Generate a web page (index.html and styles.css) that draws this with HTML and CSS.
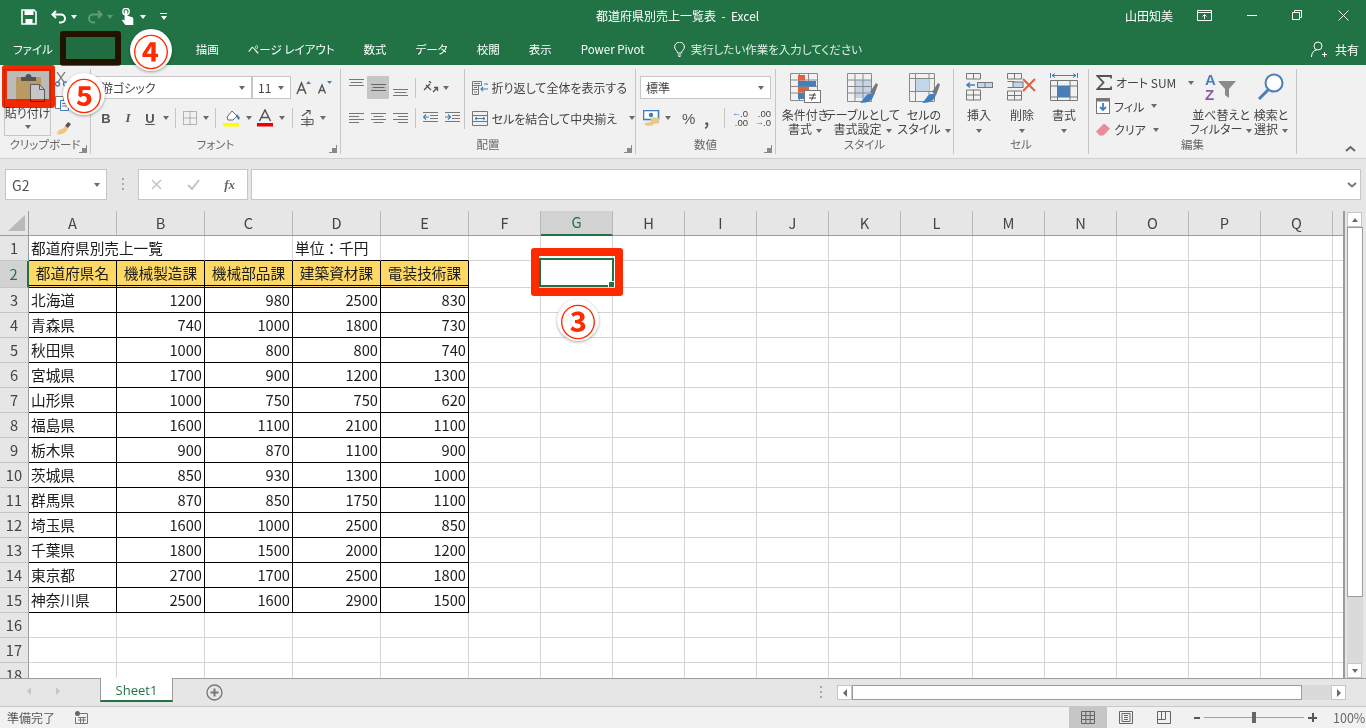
FILE: index.html
```html
<!DOCTYPE html>
<html lang="ja">
<head>
  <meta charset="UTF-8">
  <title>都道府県別売上一覧表 - Excel</title>
  <link rel="stylesheet" href="styles.css">
</head>
<body>
<div class="app">

  <!-- title bar -->
  <header class="titlebar">
    <div class="qat">
      <svg class="q-save" width="16" height="16" viewBox="0 0 16 16"><path d="M1 1h12l2 2v12H1z" fill="none" stroke="#fff" stroke-width="1.6"/><rect x="3.5" y="1" width="9" height="5" fill="#fff"/><rect x="4.5" y="10" width="7" height="5" fill="#fff"/></svg>
      <svg class="q-undo" width="16" height="14" viewBox="0 0 16 14"><path d="M5 1L1.5 4.5 5 8M2 4.5h8a4 4 0 0 1 0 8H8" fill="none" stroke="#fff" stroke-width="2"/></svg>
      <i class="caret white q-c1"></i>
      <svg class="q-redo" width="16" height="14" viewBox="0 0 16 14"><path d="M11 1l3.5 3.5L11 8M14 4.5H6a4 4 0 0 0 0 8h2" fill="none" stroke="#5f9c7e" stroke-width="2"/></svg>
      <i class="caret dim q-c2"></i>
      <svg class="q-touch" width="13" height="17" viewBox="0 0 13 17"><circle cx="5" cy="3.5" r="3.2" fill="none" stroke="#fff" stroke-width="1.4"/><path d="M3.6 3.5a1.4 1.4 0 0 1 2.8 0v4.2l4.2 1.3c1.2.4 1.7 1 1.7 2V17H4.4L1 12.6l1-1.2 1.6 1z" fill="#fff"/></svg>
      <i class="caret white q-c3"></i>
      <span class="q-more"><i class="q-line"></i><i class="caret white"></i></span>
    </div>
    <div class="doc-title">都道府県別売上一覧表&nbsp; - &nbsp;Excel</div>
    <div class="win">
      <span class="user">山田知美</span>
      <svg class="w-disp" width="15" height="11" viewBox="0 0 15 11"><path d="M.5 .5h14v10H.5zM.5 2.5h14M7.5 9V4.500M5.500 6.500l2-2 2 2" fill="none" stroke="#fff"/></svg>
      <svg class="w-min" width="10" height="1" viewBox="0 0 10 1"><path d="M0 .5h10" stroke="#fff"/></svg>
      <svg class="w-max" width="10" height="10" viewBox="0 0 10 10"><path d="M.5 2.500h7v7h-7zM2.500 2.500v-2h7v7h-2" fill="none" stroke="#fff"/></svg>
      <svg class="w-close" width="11" height="11" viewBox="0 0 11 11"><path d="M.5 .5l10 10M10.500 .5l-10 10" stroke="#fff"/></svg>
    </div>
  </header>

  <!-- tabs -->
  <nav class="tabs">
    <span class="tab">ファイル</span>
    <span class="tab active">ホーム</span>
    <span class="tab">挿入</span>
    <span class="tab">描画</span>
    <span class="tab">ページ レイアウト</span>
    <span class="tab">数式</span>
    <span class="tab">データ</span>
    <span class="tab">校閲</span>
    <span class="tab">表示</span>
    <span class="tab">Power Pivot</span>
    <span class="tell">
      <svg width="11" height="15" viewBox="0 0 11 15"><path d="M3.500 11C3.500 8.500 .6 8 .6 5a4.900 4.900 0 0 1 9.800 0c0 3-2.900 3.500-2.900 6zM3.800 13h3.400M4.500 14.500h2" fill="none" stroke="#fff"/></svg>
      実行したい作業を入力してください
    </span>
    <span class="share">
      <svg width="16" height="16" viewBox="0 0 16 16"><circle cx="7" cy="5" r="4" fill="none" stroke="#fff"/><path d="M.5 16c0-4 2-6.500 5-7M11 13.500h5M13.500 11v5" fill="none" stroke="#fff"/></svg>
      共有
    </span>
  </nav>

  <!-- ribbon -->
  <section class="ribbon">

    <div class="group g-clip">
      <div class="group-body clip-body">
        <div class="paste">
          <svg class="paste-ico" width="30" height="29" viewBox="0 0 30 29"><rect x="0" y="4" width="25" height="24" fill="#edc77f"/><path d="M5 8V4h4.500a3 3 0 0 1 6 0H20v4z" fill="#6a6a6a"/><path d="M14.500 11.500h9l5 5v12h-14z" fill="#fff" stroke="#777"/><path d="M23.500 11.500v5h5" fill="none" stroke="#777"/></svg>
          <span class="paste-label">貼り付け</span>
          <i class="caret"></i>
        </div>
        <div class="clip-tools">
          <svg width="14" height="15" viewBox="0 0 14 15"><path d="M2 0l7 10M10 0L3 10" stroke="#777" stroke-width="1.300"/><circle cx="2.500" cy="12" r="2" fill="none" stroke="#3f7fbf" stroke-width="1.300"/><circle cx="10.500" cy="12" r="2" fill="none" stroke="#3f7fbf" stroke-width="1.300"/></svg>
          <svg width="14" height="15" viewBox="0 0 14 15"><path d="M.5 .5h8v12h-8z" fill="#fff" stroke="#777"/><path d="M5.500 4.500h8v10h-8z" fill="#fff" stroke="#3f7fbf"/><path d="M7 7.500h5M7 10h5" stroke="#777"/></svg>
          <svg width="17" height="15" viewBox="0 0 17 15"><path d="M10 6l3-4 3 2-3 4z" fill="#555"/><path d="M10 6l3 2.500C11.500 13 6 15 1 14.500L3.500 13 1 12.500 4.500 11 2.500 10C6 10 8.500 8.500 10 6z" fill="#edc77f"/></svg>
        </div>
      </div>
      <div class="group-label">クリップボード</div>
      <i class="launcher"></i>
    </div>

    <div class="group g-font">
      <div class="group-body stack">
        <div class="row row-top">
          <div class="combo font-name"><span>游ゴシック</span><i class="caret"></i></div>
          <div class="combo font-size"><span>11</span><i class="caret"></i></div>
          <svg class="grow" width="15" height="14" viewBox="0 0 15 14"><path d="M1 13L5.500 2 10 13M2.800 9h5.400" fill="none" stroke="#555" stroke-width="1.500"/><path d="M10 3l2.500-3L15 3z" fill="#3f7fbf"/></svg>
          <svg class="shrink" width="15" height="13" viewBox="0 0 15 13"><path d="M1.500 12.500L5 4l3.500 8.500M2.800 9.500h4.400" fill="none" stroke="#555" stroke-width="1.400"/><path d="M10 0h5l-2.500 3z" fill="#3f7fbf"/></svg>
        </div>
        <div class="row row-bottom font-tools">
          <span class="fbtn bold">B</span>
          <span class="fbtn italic">I</span>
          <span class="fbtn under">U</span>
          <i class="caret ml2"></i>
          <i class="sep ml6"></i>
          <svg class="ml7" width="14" height="14" viewBox="0 0 14 14"><path d="M.5 .5h13v13H.500zM7 .5v13M.5 7h13" fill="none" stroke="#777" stroke-dasharray="1 1"/></svg>
          <i class="caret ml6"></i>
          <i class="sep ml6"></i>
          <svg class="ml7" width="19" height="18" viewBox="0 0 19 18"><path d="M4 8l5-6 5 5-4 4H5z" fill="#fff" stroke="#666"/><path d="M14 5l3 4-1.500 2L13.500 8z" fill="#3f7fbf"/><rect x="0" y="14" width="16" height="3.500" fill="#ffff00"/></svg>
          <i class="caret ml4"></i>
          <svg class="ml5" width="16" height="18" viewBox="0 0 16 18"><path d="M2.500 12L8 1l5.500 11M4.500 8.500h7" fill="none" stroke="#555" stroke-width="1.500"/><rect x="0" y="14" width="16" height="3.500" fill="#ee0000"/></svg>
          <i class="caret ml6"></i>
          <i class="sep ml7"></i>
          <svg class="ml7" width="14" height="18" viewBox="0 0 14 18"><path d="M2 7L9 2M6 1.500h4v4" fill="none" stroke="#555" stroke-width="1.200"/><path d="M7 7.500v10M1 10.500h12v5M1 15.500h12M3.500 13h7" fill="none" stroke="#555"/></svg>
          <i class="caret ml6"></i>
        </div>
      </div>
      <div class="group-label">フォント</div>
      <i class="launcher"></i>
    </div>

    <div class="group g-align">
      <div class="group-body align-body">
        <div class="stack align-left">
          <div class="row row-top">
            <span class="abtn"><svg width="15" height="9" viewBox="0 0 15 9"><path d="M0 .5h15M1.500 3.500h12M0 6.500h15" stroke="#777"/></svg></span>
            <span class="abtn on"><svg width="15" height="9" viewBox="0 0 15 9"><path d="M0 1.500h15M1.500 4.500h12M0 7.500h15" stroke="#666"/></svg></span>
            <span class="abtn bottom"><svg width="15" height="9" viewBox="0 0 15 9"><path d="M0 2.500h15M1.500 5.500h12M0 8.500h15" stroke="#777"/></svg></span>
            <i class="sep ml4"></i>
            <svg class="ml7" width="16" height="13" viewBox="0 0 16 13"><path d="M1 9l6-6M3 4l5 5M6 0l2 2M10 11l4-4M11 6.500h3.500V10" fill="none" stroke="#555" stroke-width="1.300"/></svg>
            <i class="caret ml4"></i>
          </div>
          <div class="row row-bottom">
            <span class="abtn"><svg width="15" height="11" viewBox="0 0 15 11"><path d="M0 .5h15M0 3.500h10M0 6.500h15M0 9.500h10" stroke="#777"/></svg></span>
            <span class="abtn"><svg width="15" height="11" viewBox="0 0 15 11"><path d="M0 .5h15M2.500 3.500h10M0 6.500h15M2.500 9.500h10" stroke="#777"/></svg></span>
            <span class="abtn"><svg width="15" height="11" viewBox="0 0 15 11"><path d="M0 .5h15M5 3.500h10M0 6.500h15M5 9.500h10" stroke="#777"/></svg></span>
            <i class="sep ml4"></i>
            <svg class="ml7" width="15" height="12" viewBox="0 0 15 12"><path d="M0 .5h15M7 3.500h8M7 6.500h8M0 9.500h15" stroke="#777"/><path d="M6 5H1M3 2.500L.5 5 3 7.500" fill="none" stroke="#3f7fbf" stroke-width="1.200"/></svg>
            <svg class="ml7" width="15" height="12" viewBox="0 0 15 12"><path d="M0 .5h15M7 3.500h8M7 6.500h8M0 9.500h15" stroke="#777"/><path d="M0 5h5M3 2.500L5.500 5 3 7.500" fill="none" stroke="#3f7fbf" stroke-width="1.200"/></svg>
          </div>
        </div>
        <div class="stack align-right">
          <div class="row wrap-row">
            <svg width="16" height="14" viewBox="0 0 16 14"><path d="M.5 .5h9v4h-9zM.5 4.500h6v4h-6zM.5 8.500h6v5h-6z" fill="none" stroke="#777"/><path d="M2 2.500h6M2 6.500h3M2 11h3" stroke="#777"/><path d="M12 3h2.500a1.500 1.500 0 0 1 0 5H9M11 6L9 8l2 2" fill="none" stroke="#3f7fbf" stroke-width="1.100"/></svg>
            <span class="txt">折り返して全体を表示する</span>
          </div>
          <div class="row merge-row">
            <svg width="16" height="15" viewBox="0 0 16 15"><path d="M.5 .5h15v14H.5zM.5 4.500h15M.5 10.500h15" fill="none" stroke="#777"/><path d="M3 7.500h10M5 5.800L3 7.500l2 1.700M11 5.800l2 1.700-2 1.700" fill="none" stroke="#3f7fbf"/></svg>
            <span class="txt">セルを結合して中央揃え</span>
            <i class="caret ml12"></i>
          </div>
        </div>
      </div>
      <div class="group-label">配置</div>
      <i class="launcher"></i>
    </div>

    <div class="group g-num">
      <div class="group-body stack">
        <div class="row row-top"><div class="combo num-format"><span>標準</span><i class="caret"></i></div></div>
        <div class="row row-bottom num-tools">
          <svg width="17" height="16" viewBox="0 0 17 16"><rect x=".5" y=".5" width="15" height="9" fill="#fff" stroke="#3f7fbf" stroke-width="1.600"/><circle cx="8" cy="5" r="2.200" fill="#3f7fbf"/><ellipse cx="12" cy="9" rx="4.500" ry="1.800" fill="#edc77f"/><ellipse cx="12" cy="12" rx="4.500" ry="1.800" fill="#edc77f"/><ellipse cx="6" cy="14" rx="4.500" ry="1.800" fill="#edc77f"/></svg>
          <i class="caret ml5"></i>
          <span class="pct">%</span>
          <span class="comma">,</span>
          <i class="sep ml12"></i>
          <span class="dec"><b class="arr">←</b><em>.0</em><em class="full">.00</em></span>
          <span class="dec d2"><em>.00</em><b class="arr">→</b><em class="tail">.0</em></span>
        </div>
      </div>
      <div class="group-label">数値</div>
      <i class="launcher"></i>
    </div>

    <div class="group g-style">
      <div class="group-body big-row">
        <div class="big b-cond">
          <svg width="31" height="36" viewBox="0 0 31 36"><path d="M.5 .5h27v27H.5zM9.500 .5v27M18.500 .5v27M.5 7h27M.5 13.500h27M.5 20h27" fill="none" stroke="#8a8a8a"/><rect x="8" y="2" width="7" height="5.500" fill="#e0633f"/><rect x="8" y="8" width="18" height="5.500" fill="#4a7ebb"/><rect x="8" y="14" width="11" height="5.500" fill="#e0633f"/><rect x="8" y="20" width="6" height="6" fill="#4a7ebb"/><rect x="14.500" y="17.500" width="16" height="12" fill="#fff" stroke="#777"/><path d="M19 22h7M19 25h7M24.500 20l-3 7.500" fill="none" stroke="#444"/></svg>
          <span class="big-label">条件付き<br>書式<i class="caret ml4"></i></span>
        </div>
        <div class="big b-table">
          <svg width="31" height="36" viewBox="0 0 31 36"><rect x="8" y="7" width="17" height="18" fill="#c5d5e8"/><path d="M.5 .5h24v28H.5zM8 .5v28M16 .5v28M.5 7h24M.5 13.500h24M.5 20h24" fill="none" stroke="#8a8a8a"/><path d="M23 19l6-9 2 1.500-4 11z" fill="#777"/><path d="M27 21c-1 6-5 9-14 9 2-1 4-6 8-9z" fill="#3f7fbf"/></svg>
          <span class="big-label">テーブルとして<br>書式設定<i class="caret ml4"></i></span>
        </div>
        <div class="big b-cell">
          <svg width="31" height="36" viewBox="0 0 31 36"><path d="M.5 .5h25v28H.5zM6.500 .5v28M20 .5v28M.5 5.500h25M.5 18.500h25" fill="none" stroke="#8a8a8a"/><rect x="7" y="6" width="13" height="12" fill="#c5d5e8"/><path d="M23 19l6-9 2 1.500-4 11z" fill="#777"/><path d="M27 21c-1 6-5 9-14 9 2-1 4-6 8-9z" fill="#3f7fbf"/></svg>
          <span class="big-label">セルの<br>スタイル<i class="caret ml4"></i></span>
        </div>
      </div>
      <div class="group-label">スタイル</div>
    </div>

    <div class="group g-cell">
      <div class="group-body big-row">
        <div class="big c-ins">
          <svg width="27" height="36" viewBox="0 0 27 36"><path d="M.5 .5h14v5.500H.5zM7.500 .5v5.500M.5 17h14v10H.5zM.5 22h14M7.500 17v10" fill="none" stroke="#777"/><rect x="11.500" y="9.500" width="15" height="5" fill="#c5d5e8" stroke="#777"/><path d="M19 9.500v5" stroke="#777"/><path d="M9 12H1M4 9.500L1 12l3 2.500" fill="none" stroke="#3f7fbf" stroke-width="1.500"/></svg>
          <span class="big-label">挿入<br><i class="caret"></i></span>
        </div>
        <div class="big c-del">
          <svg width="30" height="36" viewBox="0 0 30 36"><path d="M.5 .5h14v5.500H.5zM7.500 .5v5.500M.5 8.500h7v6H.5M.5 18h14v9H.5zM.5 22.500h14M7.500 18v9" fill="none" stroke="#777"/><rect x="6" y="9" width="10" height="5.500" fill="#c5d5e8" stroke="#777"/><path d="M16 6l12 12M28 6L16 18" stroke="#e0633f" stroke-width="2"/></svg>
          <span class="big-label">削除<br><i class="caret"></i></span>
        </div>
        <div class="big c-fmt">
          <svg width="28" height="36" viewBox="0 0 28 36"><path d="M.5 0v5M27.500 0v5M2 2.500h24M5 .5L2 2.500l3 2M23 .5l3 2-3 2" fill="none" stroke="#3f7fbf"/><path d="M.5 7.500h27v20H.5zM7.500 7.500v20M20 7.500v20M.5 13h27M.5 24h27" fill="none" stroke="#777"/><rect x="8" y="13" width="12" height="11" fill="#4a7ebb"/></svg>
          <span class="big-label">書式<br><i class="caret"></i></span>
        </div>
      </div>
      <div class="group-label">セル</div>
    </div>

    <div class="group g-edit">
      <div class="group-body edit-body">
        <div class="edit-col">
          <div class="row edit-row">
            <svg width="16" height="15" viewBox="0 0 16 15"><path d="M15 3.500V1H1.500l6 6.500-6 6.500H15v-2.500" fill="none" stroke="#555" stroke-width="1.800"/></svg>
            <span class="txt">オート SUM</span>
            <i class="caret ml12"></i>
          </div>
          <div class="row edit-row">
            <svg width="14" height="16" viewBox="0 0 14 16"><rect x=".5" y=".5" width="13" height="15" fill="#fff" stroke="#777"/><rect x="1" y="1" width="12" height="2.500" fill="#777"/><path d="M7 5v7M4 9l3 3 3-3" fill="none" stroke="#3f7fbf" stroke-width="1.800"/></svg>
            <span class="txt">フィル</span>
            <i class="caret ml7"></i>
          </div>
          <div class="row edit-row">
            <svg width="14" height="13" viewBox="0 0 14 13"><path d="M0 8.500L8 .5l6 5-6.500 7H3.500z" fill="#ed8a9c"/></svg>
            <span class="txt">クリア</span>
            <i class="caret ml7"></i>
          </div>
        </div>
        <div class="big e-sort">
          <svg width="32" height="36" viewBox="0 0 32 36"><text x="0" y="12" class="az a">A</text><text x="0" y="27" class="az z">Z</text><path d="M13 8h18l-7 8v9l-4-3v-6z" fill="#8a8a8a"/></svg>
          <span class="big-label">並べ替えと<br>フィルター<i class="caret ml4"></i></span>
        </div>
        <div class="big e-find">
          <svg width="28" height="36" viewBox="0 0 28 36"><circle cx="17" cy="10" r="8.500" fill="#fff" stroke="#4a7ebb" stroke-width="2"/><path d="M11 17L2 26" stroke="#4a7ebb" stroke-width="3"/></svg>
          <span class="big-label">検索と<br>選択<i class="caret ml4"></i></span>
        </div>
      </div>
      <div class="group-label">編集</div>
    </div>

    <svg class="collapse" width="11" height="7" viewBox="0 0 11 7"><path d="M1 6l4.500-4L10 6" fill="none" stroke="#666" stroke-width="2"/></svg>
  </section>

  <!-- formula bar -->
  <div class="formula">
    <div class="namebox"><span>G2</span><i class="caret"></i></div>
    <span class="dots"></span>
    <div class="fx-box">
      <svg width="11" height="11" viewBox="0 0 11 11"><path d="M1 1l9 9M10 1l-9 9" stroke="#c4c4c4" stroke-width="1.500"/></svg>
      <svg width="13" height="11" viewBox="0 0 13 11"><path d="M1 6l4 4 7-9" fill="none" stroke="#c4c4c4" stroke-width="2"/></svg>
      <em class="fx">fx</em>
    </div>
    <div class="fx-input">
      <svg width="10" height="6" viewBox="0 0 10 6"><path d="M1 1l4 3.500L9 1" fill="none" stroke="#777" stroke-width="2"/></svg>
    </div>
  </div>

  <!-- sheet -->
  <div class="sheet-wrap">
    <div class="sheet">
      <table class="cells">
        <colgroup>
          <col class="c-rowhead">
          <col class="c-wide"><col class="c-wide"><col class="c-wide"><col class="c-wide"><col class="c-wide">
          <col class="c-std"><col class="c-std"><col class="c-std"><col class="c-std"><col class="c-std"><col class="c-std"><col class="c-std"><col class="c-std"><col class="c-std"><col class="c-std"><col class="c-std"><col class="c-std"><col class="c-std">
        </colgroup>
        <tr class="col-head"><th class="corner"><i></i></th><th>A</th><th>B</th><th>C</th><th>D</th><th>E</th><th>F</th><th class="sel">G</th><th>H</th><th>I</th><th>J</th><th>K</th><th>L</th><th>M</th><th>N</th><th>O</th><th>P</th><th>Q</th><th></th></tr>
        <tr class="r1"><th>1</th><td class="l nob">都道府県別売上一覧</td><td class="edge"></td><td class="edge"></td><td class="l edge">単位：千円</td><td class="edge"></td><td></td><td></td><td></td><td></td><td></td><td></td><td></td><td></td><td></td><td></td><td></td><td></td><td></td></tr>
        <tr class="r2"><th class="sel">2</th><td class="h">都道府県名</td><td class="h">機械製造課</td><td class="h">機械部品課</td><td class="h">建築資材課</td><td class="h">電装技術課</td><td></td><td></td><td></td><td></td><td></td><td></td><td></td><td></td><td></td><td></td><td></td><td></td><td></td></tr>
        <tr><th>3</th><td class="b l">北海道</td><td class="b">1200</td><td class="b">980</td><td class="b">2500</td><td class="b">830</td><td></td><td></td><td></td><td></td><td></td><td></td><td></td><td></td><td></td><td></td><td></td><td></td><td></td></tr>
        <tr><th>4</th><td class="b l">青森県</td><td class="b">740</td><td class="b">1000</td><td class="b">1800</td><td class="b">730</td><td></td><td></td><td></td><td></td><td></td><td></td><td></td><td></td><td></td><td></td><td></td><td></td><td></td></tr>
        <tr><th>5</th><td class="b l">秋田県</td><td class="b">1000</td><td class="b">800</td><td class="b">800</td><td class="b">740</td><td></td><td></td><td></td><td></td><td></td><td></td><td></td><td></td><td></td><td></td><td></td><td></td><td></td></tr>
        <tr><th>6</th><td class="b l">宮城県</td><td class="b">1700</td><td class="b">900</td><td class="b">1200</td><td class="b">1300</td><td></td><td></td><td></td><td></td><td></td><td></td><td></td><td></td><td></td><td></td><td></td><td></td><td></td></tr>
        <tr><th>7</th><td class="b l">山形県</td><td class="b">1000</td><td class="b">750</td><td class="b">750</td><td class="b">620</td><td></td><td></td><td></td><td></td><td></td><td></td><td></td><td></td><td></td><td></td><td></td><td></td><td></td></tr>
        <tr><th>8</th><td class="b l">福島県</td><td class="b">1600</td><td class="b">1100</td><td class="b">2100</td><td class="b">1100</td><td></td><td></td><td></td><td></td><td></td><td></td><td></td><td></td><td></td><td></td><td></td><td></td><td></td></tr>
        <tr><th>9</th><td class="b l">栃木県</td><td class="b">900</td><td class="b">870</td><td class="b">1100</td><td class="b">900</td><td></td><td></td><td></td><td></td><td></td><td></td><td></td><td></td><td></td><td></td><td></td><td></td><td></td></tr>
        <tr><th>10</th><td class="b l">茨城県</td><td class="b">850</td><td class="b">930</td><td class="b">1300</td><td class="b">1000</td><td></td><td></td><td></td><td></td><td></td><td></td><td></td><td></td><td></td><td></td><td></td><td></td><td></td></tr>
        <tr><th>11</th><td class="b l">群馬県</td><td class="b">870</td><td class="b">850</td><td class="b">1750</td><td class="b">1100</td><td></td><td></td><td></td><td></td><td></td><td></td><td></td><td></td><td></td><td></td><td></td><td></td><td></td></tr>
        <tr><th>12</th><td class="b l">埼玉県</td><td class="b">1600</td><td class="b">1000</td><td class="b">2500</td><td class="b">850</td><td></td><td></td><td></td><td></td><td></td><td></td><td></td><td></td><td></td><td></td><td></td><td></td><td></td></tr>
        <tr><th>13</th><td class="b l">千葉県</td><td class="b">1800</td><td class="b">1500</td><td class="b">2000</td><td class="b">1200</td><td></td><td></td><td></td><td></td><td></td><td></td><td></td><td></td><td></td><td></td><td></td><td></td><td></td></tr>
        <tr><th>14</th><td class="b l">東京都</td><td class="b">2700</td><td class="b">1700</td><td class="b">2500</td><td class="b">1800</td><td></td><td></td><td></td><td></td><td></td><td></td><td></td><td></td><td></td><td></td><td></td><td></td><td></td></tr>
        <tr><th>15</th><td class="b l">神奈川県</td><td class="b">2500</td><td class="b">1600</td><td class="b">2900</td><td class="b">1500</td><td></td><td></td><td></td><td></td><td></td><td></td><td></td><td></td><td></td><td></td><td></td><td></td><td></td></tr>
        <tr><th>16</th><td></td><td></td><td></td><td></td><td></td><td></td><td></td><td></td><td></td><td></td><td></td><td></td><td></td><td></td><td></td><td></td><td></td><td></td></tr>
        <tr><th>17</th><td></td><td></td><td></td><td></td><td></td><td></td><td></td><td></td><td></td><td></td><td></td><td></td><td></td><td></td><td></td><td></td><td></td><td></td></tr>
        <tr><th>18</th><td></td><td></td><td></td><td></td><td></td><td></td><td></td><td></td><td></td><td></td><td></td><td></td><td></td><td></td><td></td><td></td><td></td><td></td></tr>
      </table>
      <div class="cursor"><i class="handle"></i></div>
    </div>
    <div class="vscroll">
      <span class="sb-btn"><i class="caret up"></i></span>
      <span class="sb-thumb"></span>
      <span class="sb-track"></span>
      <span class="sb-btn"><i class="caret"></i></span>
    </div>
  </div>

  <!-- sheet tabs + horizontal scrollbar -->
  <div class="sheetbar">
    <i class="nav-l"></i>
    <i class="nav-r"></i>
    <div class="sheet-tab">Sheet1</div>
    <svg class="add" width="17" height="17" viewBox="0 0 17 17"><circle cx="8.500" cy="8.500" r="7.500" fill="none" stroke="#777" stroke-width="1.300"/><path d="M4.500 8.500h8M8.500 4.500v8" stroke="#777" stroke-width="2"/></svg>
    <span class="dots bar-dots"></span>
    <div class="hscroll">
      <span class="sb-btn"><i class="tri-l"></i></span>
      <span class="sb-thumb"></span>
      <span class="sb-track"></span>
      <span class="sb-btn"><i class="tri-r"></i></span>
    </div>
  </div>

  <!-- status bar -->
  <footer class="status">
    <span class="ready">準備完了</span>
    <svg class="macro" width="13" height="13" viewBox="0 0 13 13"><circle cx="2.500" cy="2.500" r="2.500" fill="#666"/><path d="M5 2.500h7.500v10H.5V6M3 6.500h8M3 9h8M5.500 6v6M8.500 6v6" fill="none" stroke="#777"/></svg>
    <div class="views">
      <span class="view on"><svg width="14" height="13" viewBox="0 0 14 13"><path d="M.5 .5h13v12H.5zM.5 4.500h13M.5 8.500h13M4.800 .5v12M9.200 .5v12" fill="none" stroke="#666"/></svg></span>
      <span class="view"><svg width="14" height="13" viewBox="0 0 14 13"><path d="M.5 .5h13v12H.5zM3 2.500h8v8H3zM5 4.500h4M5 6.500h4M5 8.500h4" fill="none" stroke="#666"/></svg></span>
      <span class="view"><svg width="14" height="13" viewBox="0 0 14 13"><path d="M.5 .5h13v12H.5zM.5 8.500h8V.5M4.500 .5v8" fill="none" stroke="#666"/></svg></span>
    </div>
    <div class="zoom">
      <i class="z-minus"></i>
      <span class="z-line"><i class="z-thumb"></i></span>
      <i class="z-plus"></i>
      <span class="z-val">100%</span>
    </div>
  </footer>

  <!-- annotations -->
  <div class="red-box box-home"></div>
  <div class="red-box box-paste"></div>
  <div class="red-box box-cell"></div>
  <span class="num num-3">③</span>
  <span class="num num-4">④</span>
  <span class="num num-5">⑤</span>
</div>
</body>
</html>
```

FILE: styles.css
```css
* {
  box-sizing: border-box;
}

html, body {
  margin: 0;
  height: 100%;
  overflow: hidden;
}

body {
  font-family: "Noto Sans CJK JP", sans-serif;
  font-size: 12px;
  color: #444;
}

.app {
  position: relative;
  display: flex;
  flex-direction: column;
  width: 1366px;
  height: 728px;
  overflow: hidden;
  background: #e6e6e6;
}

i, em {
  font-style: normal;
}

svg {
  display: block;
  flex: none;
}

/* small shared bits */
.caret {
  display: inline-block;
  flex: none;
  width: 0;
  height: 0;
  border-left: 3.5px solid transparent;
  border-right: 3.5px solid transparent;
  border-top: 4px solid #6a6a6a;
  vertical-align: middle;
}
.caret.white { border-top-color: #fff; }
.caret.dim { border-top-color: #5f9c7e; }
.caret.up { border-top: 0; border-bottom: 4px solid #6a6a6a; }

.ml2 { margin-left: 2px; }
.ml4 { margin-left: 4px; }
.ml5 { margin-left: 5px; }
.ml6 { margin-left: 6px; }
.ml7 { margin-left: 7px; }
.ml12 { margin-left: 12px; }

.sep {
  display: block;
  flex: none;
  width: 1px;
  height: 20px;
  background: #c6c6c6;
}

/* title bar */
.titlebar {
  position: relative;
  display: flex;
  align-items: center;
  height: 33px;
  flex: none;
  background: #217346;
  color: #fff;
}

.qat {
  display: flex;
  align-items: center;
  padding-left: 21px;
}
.q-undo { margin-left: 14px; }
.q-c1 { margin-left: 4px; }
.q-redo { margin-left: 10px; }
.q-c2 { margin-left: 4px; }
.q-touch { margin-left: 8px; }
.q-c3 { margin-left: 6px; }
.q-more {
  display: flex;
  flex-direction: column;
  align-items: center;
  gap: 2px;
  margin-left: 14px;
}
.q-line {
  display: block;
  width: 7px;
  height: 1px;
  background: #fff;
}

.doc-title {
  position: absolute;
  left: 596px;
  top: 7px;
  font-size: 12px;
  line-height: 18px;
  white-space: nowrap;
}

.win {
  display: flex;
  align-items: center;
  margin-left: auto;
}
.user { position: absolute; left: 1125px; top: 7px; line-height: 18px; }
.w-disp { position: absolute; left: 1197px; top: 10px; }
.w-min { position: absolute; left: 1247px; top: 15px; }
.w-max { position: absolute; left: 1292px; top: 10px; }
.w-close { position: absolute; left: 1338px; top: 10px; }

/* tabs */
.tabs {
  display: flex;
  align-items: center;
  height: 32px;
  flex: none;
  padding: 0 7px 0 13px;
  gap: 29px;
  background: #217346;
  color: #fff;
  font-size: 11.5px;
  font-feature-settings: "palt";
  white-space: nowrap;
}
.tab.active { color: #217346; }
.tell {
  display: flex;
  align-items: center;
  gap: 6px;
  color: #e2eee8;
}
.share {
  display: flex;
  align-items: center;
  gap: 8px;
  margin-left: auto;
  font-size: 12px;
}

/* ribbon */
.ribbon {
  display: flex;
  height: 94px;
  flex: none;
  align-items: flex-start;
  padding-top: 4px;
  background: #f1f1f1;
  border-bottom: 1px solid #cfcfcf;
  font-feature-settings: "palt";
  position: relative;
}

.group {
  position: relative;
  display: flex;
  flex-direction: column;
  height: 85px;
  flex: none;
  border-right: 1px solid #c6c6c6;
}
.g-clip { width: 91px; }
.g-font { width: 250px; }
.g-align { width: 295px; }
.g-num { width: 140px; }
.g-style { width: 178px; }
.g-cell { width: 135px; }
.g-edit { width: 208px; }

.group-body {
  flex: 1;
  min-height: 0;
}
.group-label {
  height: 18px;
  line-height: 16px;
  text-align: center;
  font-size: 11.5px;
  color: #666;
  white-space: nowrap;
}
.launcher {
  position: absolute;
  right: 3px;
  bottom: 1px;
  width: 8px;
  height: 8px;
  border-left: 1px solid #8a8a8a;
  border-bottom: 1px solid #8a8a8a;
  transform: rotate(-90deg);
}
.launcher::after {
  content: "";
  position: absolute;
  left: 0;
  bottom: 0;
  width: 4px;
  height: 4px;
  background: #8a8a8a;
}

.stack {
  display: flex;
  flex-direction: column;
}
.row {
  display: flex;
  align-items: center;
}
.row-top {
  height: 23px;
  margin-top: 7px;
}
.row-bottom {
  height: 22px;
  margin-top: 8px;
}

/* clipboard */
.clip-body {
  display: flex;
  padding-left: 4px;
}
.paste {
  display: flex;
  flex-direction: column;
  align-items: center;
  width: 47px;
  height: 67px;
  border: 1px solid #c6c6c6;
}
.paste-ico {
  margin: 3px 0 0 6px;
}
.paste-label {
  margin-top: 3px;
  line-height: 16px;
  white-space: nowrap;
}
.paste .caret { margin-top: 4px; }
.clip-tools {
  display: flex;
  flex-direction: column;
  gap: 9px;
  margin: 3px 0 0 4px;
}

/* font */
.g-font .stack { padding-left: 4px; }
.combo {
  display: flex;
  align-items: center;
  justify-content: space-between;
  height: 23px;
  padding: 0 6px 0 5px;
  background: #fff;
  border: 1px solid #c6c6c6;
}
.font-name { width: 157px; }
.font-size { width: 39px; }
.grow { margin-left: 5px; }
.shrink { margin-left: 6px; }
.font-tools { padding-left: 0; }
.fbtn {
  width: 22px;
  text-align: center;
  font-family: "Liberation Sans", sans-serif;
  font-size: 13px;
  color: #555;
  font-weight: 700;
}
.italic { font-style: italic; font-family: "Liberation Serif", serif; }
.under { text-decoration: underline; }

/* alignment */
.align-body {
  display: flex;
}
.align-left {
  width: 127px;
  height: 60px;
  padding-left: 4px;
  border-right: 1px solid #c6c6c6;
  margin-top: 0;
}
.align-left .row-bottom { margin-top: 8px; }
.abtn {
  display: flex;
  align-items: flex-start;
  justify-content: center;
  width: 22px;
  height: 23px;
  padding-top: 3px;
}
.row-bottom .abtn {
  align-items: center;
  padding-top: 0;
}
.abtn.on {
  align-items: center;
  padding-top: 0;
  background: #c6c6c6;
}
.abtn.bottom {
  align-items: flex-end;
  padding: 0 0 3px;
}
.align-right {
  padding-left: 7px;
}
.wrap-row {
  height: 23px;
  margin-top: 7px;
}
.merge-row {
  height: 22px;
  margin-top: 8px;
}
.txt {
  margin-left: 4px;
  white-space: nowrap;
}

/* number */
.g-num .stack { padding-left: 4px; }
.num-format { width: 131px; }
.num-tools { padding-left: 3px; }
.pct {
  width: 16px;
  margin-left: 11px;
  font-size: 15px;
  font-family: "Liberation Sans", sans-serif;
  color: #555;
}
.comma {
  margin-left: 6px;
  width: 8px;
  font-size: 16px;
  font-weight: 700;
  line-height: 12px;
  color: #555;
}
.dec {
  display: grid;
  grid-template-columns: 8px 8px;
  margin-left: 7px;
  width: 16px;
  font-family: "Liberation Sans", sans-serif;
  font-size: 9.5px;
  line-height: 9px;
  color: #444;
  text-align: right;
}
.dec .arr {
  color: #3f7fbf;
  font-weight: 700;
  font-size: 9px;
  text-align: left;
}
.dec .full { grid-column: 1 / 3; }
.dec.d2 { margin-left: 7px; }
.dec.d2 em:first-child { grid-column: 1 / 3; }
.dec .tail { text-align: right; }

/* large buttons */
.big-row {
  display: flex;
  padding-left: 4px;
}
.big {
  display: flex;
  flex-direction: column;
  align-items: center;
  flex: none;
  padding-top: 4px;
}
.big-label {
  margin-top: -1px;
  text-align: center;
  line-height: 14px;
  white-space: nowrap;
}
.b-cond { width: 50px; }
.b-table { width: 65px; }
.b-cell { width: 58px; }
.g-cell .big-row { padding-left: 3px; }
.c-ins { width: 44px; }
.c-del { width: 42px; }
.c-fmt { width: 42px; }

/* editing */
.edit-body {
  display: flex;
  padding-left: 7px;
}
.edit-col {
  width: 95px;
  padding-top: 2px;
}
.edit-row {
  height: 23.500px;
}
.e-sort { width: 60px; }
.e-find { width: 40px; }
.az {
  font-family: "Liberation Sans", sans-serif;
  font-weight: 700;
  font-size: 15px;
}
.az.a { fill: #4a7ebb; }
.az.z { fill: #8a5aa8; }

.collapse {
  position: absolute;
  right: 10px;
  bottom: 6px;
}

/* formula bar */
.formula {
  display: flex;
  align-items: flex-start;
  height: 52px;
  flex: none;
  padding: 10px 5px 0;
  background: #e6e6e6;
}
.namebox {
  display: flex;
  align-items: center;
  justify-content: space-between;
  width: 102px;
  height: 31px;
  padding: 0 6px 0 6px;
  background: #fff;
  border: 1px solid #c6c6c6;
  font-size: 14px;
  color: #555;
}
.dots {
  display: block;
  width: 2px;
  height: 12px;
  margin: 9px 14px 0 15px;
  background-image: repeating-linear-gradient(#a8a8a8 0 2px, transparent 2px 5px);
}
.fx-box {
  display: flex;
  align-items: center;
  justify-content: space-between;
  width: 110px;
  height: 31px;
  padding: 0 12px;
  background: #fff;
  border: 1px solid #c6c6c6;
}
.fx {
  font-family: "Liberation Serif", serif;
  font-style: italic;
  font-weight: 700;
  font-size: 13px;
  color: #666;
}
.fx-input {
  display: flex;
  align-items: center;
  justify-content: flex-end;
  flex: 1;
  height: 31px;
  margin-left: 3px;
  padding-right: 3px;
  background: #fff;
  border: 1px solid #c6c6c6;
}

/* sheet */
.sheet-wrap {
  display: flex;
  flex: 1;
  min-height: 0;
}
.sheet {
  position: relative;
  width: 1345px;
  height: 100%;
  overflow: hidden;
  background: #fff;
  border-right: 2px solid #9c9c9c;
}
.cells {
  table-layout: fixed;
  width: 1376px;
  border-collapse: separate;
  border-spacing: 0;
  font-size: 14.67px;
  color: #1c1c1c;
}
.c-rowhead { width: 29px; }
.c-wide { width: 88px; }
.c-std { width: 72px; }

.cells th {
  padding: 0;
  font-weight: 400;
  background: #e6e6e6;
  color: #444;
  border-right: 1px solid #9c9c9c;
  border-bottom: 1px solid #c6c6c6;
  line-height: 1;
}
.col-head th {
  height: 24px;
  border-right: 1px solid #b8b8b8;
  border-bottom: 1px solid #9c9c9c;
}
.cells th.corner {
  position: relative;
  border-right: 1px solid #9c9c9c;
}
.corner i {
  position: absolute;
  left: 8px;
  top: 4px;
  width: 0;
  height: 0;
  border-left: 17px solid transparent;
  border-bottom: 16px solid #b9b9b9;
}
.col-head th.sel {
  background: #d2d2d2;
  color: #217346;
  border-bottom: 2px solid #217346;
}
.cells th.sel {
  background: #d2d2d2;
  color: #217346;
  border-right: 2px solid #217346;
}
.col-head th.sel { border-right: 1px solid #b8b8b8; }

.cells tr { height: 25px; }
.cells td {
  height: 25px;
  padding: 0 2px;
  line-height: 1;
  text-align: right;
  white-space: nowrap;
  border-right: 1px solid #d4d4d4;
  border-bottom: 1px solid #d4d4d4;
}
.cells td.l { text-align: left; }
.cells td.nob { border-right: 0; border-bottom-color: #000; }
.cells td.edge { border-bottom-color: #000; }
.cells .r2 td, .cells .r2 th { height: 27px; }
.cells td.h {
  text-align: center;
  background: #ffd966;
  border-right: 1px solid #000;
  border-bottom: 3px double #000;
}
.cells td.b {
  border-right: 1px solid #000;
  border-bottom: 1px solid #000;
}
.cells td:nth-child(2).h, .cells td:nth-child(2).b {
  box-shadow: none;
}

.cursor {
  position: absolute;
  left: 539px;
  top: 47px;
  width: 75px;
  height: 29px;
  border: 2px solid #217346;
  box-shadow: inset 0 0 0 1px #fff;
}
.handle {
  position: absolute;
  right: -2px;
  bottom: -2px;
  width: 6px;
  height: 6px;
  background: #217346;
  border: 1px solid #fff;
  border-width: 1px 0 0 1px;
}

/* scrollbars */
.vscroll {
  display: flex;
  flex-direction: column;
  width: 21px;
  height: 100%;
  padding: 1px 3px 0 2px;
  background: #e6e6e6;
}
.sb-btn {
  display: flex;
  align-items: center;
  justify-content: center;
  flex: none;
  width: 15px;
  height: 15px;
  background: #fff;
  border: 1px solid #c6c6c6;
}
.vscroll .sb-thumb {
  display: block;
  height: 370px;
  flex: none;
  background: #fff;
  border: 1px solid #9c9c9c;
}
.sb-track {
  display: block;
  flex: 1;
  background: #dadada;
}

.sheetbar {
  position: relative;
  display: flex;
  align-items: flex-start;
  height: 28px;
  flex: none;
  background: #e6e6e6;
  border-top: 1px solid #9c9c9c;
}
.nav-l, .nav-r {
  position: absolute;
  top: 8px;
  width: 0;
  height: 0;
  border-top: 4px solid transparent;
  border-bottom: 4px solid transparent;
}
.nav-l { left: 27px; border-right: 4px solid #c6c6c6; }
.nav-r { left: 56px; border-left: 4px solid #c6c6c6; }
.sheet-tab {
  width: 73px;
  height: 24px;
  margin: -1px 0 0 100px;
  padding-top: 1px;
  background: #fff;
  border: 1px solid #9c9c9c;
  border-top: 0;
  border-bottom: 2px solid #217346;
  color: #217346;
  font-family: "Open Sans", sans-serif;
  font-size: 13px;
  line-height: 22px;
  text-align: center;
}
.add { margin: 5px 0 0 33px; }
.bar-dots {
  margin: 7px 0 0 597px;
}
.hscroll {
  display: flex;
  width: 509px;
  height: 15px;
  margin: 6px 0 0 15px;
}
.hscroll .sb-btn { width: 15px; }
.hscroll .sb-thumb {
  display: block;
  width: 450px;
  flex: none;
  background: #fff;
  border: 1px solid #9c9c9c;
}
.tri-l, .tri-r {
  width: 0;
  height: 0;
  border-top: 4px solid transparent;
  border-bottom: 4px solid transparent;
}
.tri-l { border-right: 4px solid #6a6a6a; }
.tri-r { border-left: 4px solid #6a6a6a; }

/* status bar */
.status {
  display: flex;
  align-items: center;
  height: 22px;
  flex: none;
  padding-left: 7px;
  background: #f1f1f1;
  border-top: 1px solid #c8c8c8;
  color: #555;
}
.ready { width: 68px; }
.views {
  display: flex;
  align-self: stretch;
  margin-left: auto;
}
.view {
  display: flex;
  align-items: center;
  justify-content: center;
  width: 38px;
}
.view.on { background: #c6c6c6; }
.zoom {
  display: flex;
  align-items: center;
  width: 178px;
  margin-left: 5px;
  padding-left: 6px;
  flex: none;
}
.z-minus {
  width: 6px;
  height: 2px;
  background: #555;
}
.z-line {
  position: relative;
  width: 100px;
  height: 1px;
  margin: 0 4px;
  background: #a0a0a0;
}
.z-thumb {
  position: absolute;
  left: 48px;
  top: -5px;
  width: 4px;
  height: 11px;
  background: #666;
}
.z-plus {
  position: relative;
  width: 9px;
  height: 2px;
  background: #555;
}
.z-plus::after {
  content: "";
  position: absolute;
  left: 3.500px;
  top: -3.500px;
  width: 2px;
  height: 9px;
  background: #555;
}
.z-val {
  margin-left: 16px;
  font-size: 12.500px;
  color: #666;
}

/* red annotations drawn on top of the screenshot */
.red-box {
  position: absolute;
  border: 6px solid #ff2a00;
  border-radius: 3px;
  pointer-events: none;
}
.box-home {
  left: 60px;
  top: 31px;
  width: 61px;
  height: 35px;
  border-width: 6px 6px 7px;
  background: #f1f1f1;
  mix-blend-mode: multiply;
}
.box-paste {
  left: 2px;
  top: 65px;
  width: 53px;
  height: 43px;
  border-width: 6px 6px 9px 5px;
  background: #c6c6c6;
  mix-blend-mode: multiply;
}
.box-cell {
  left: 531px;
  top: 248px;
  width: 92px;
  height: 48px;
  border-width: 8px;
}

.num {
  position: absolute;
  display: flex;
  align-items: center;
  justify-content: center;
  width: 42px;
  height: 42px;
  border-radius: 50%;
  background: #fff;
  box-shadow: 0 1px 3px rgba(0, 0, 0, 0.35);
  color: #ff2a00;
  font-size: 36px;
  font-weight: 700;
  line-height: 1;
}
.num-3 { left: 557px; top: 299px; }
.num-4 { left: 130px; top: 29px; }
.num-5 { left: 63px; top: 73px; }
```
